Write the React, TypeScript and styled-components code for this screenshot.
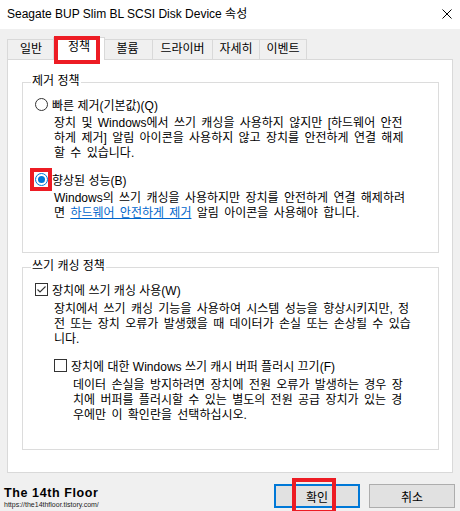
import React from 'react';
import styled, { createGlobalStyle } from 'styled-components';

const GlobalStyle = createGlobalStyle`
  html, body {
    margin: 0;
    padding: 0;
    background: #f0f0f0;
  }
  body {
    font-family: 'Liberation Sans', 'Noto Sans CJK KR', sans-serif;
    font-size: 12px;
    color: #000;
  }
`;

const Window = styled.div`
  width: 460px;
  height: 511px;
  overflow: hidden;
  display: flex;
  flex-direction: column;
  background: #f0f0f0;
`;

const TitleBar = styled.div`
  height: 29px;
  flex-shrink: 0;
  background: #fff;
  display: flex;
  align-items: center;
  justify-content: space-between;
  padding: 0 8px 0 7px;
`;

const TitleText = styled.span`
  font-size: 12px;
  line-height: 15px;
  margin-top: -1px;
`;

const CloseButton = styled.svg`
  width: 10px;
  height: 10px;
  margin-top: -2px;
`;

const Body = styled.div`
  flex: 1;
  display: flex;
  flex-direction: column;
  padding: 8px 7px 0 7px;
`;

const TabStrip = styled.div`
  display: flex;
  align-items: flex-end;
  height: 23px;
  margin-bottom: -1px;
  position: relative;
  z-index: 1;
`;

const Tab = styled.div<{ $width: number; $active?: boolean; $first?: boolean }>`
  position: relative;
  box-sizing: border-box;
  width: ${(p) => (p.$active ? p.$width + 4 : p.$width)}px;
  margin: ${(p) => (p.$active ? '0 -2px' : '0')};
  height: ${(p) => (p.$active ? 23 : 21)}px;
  background: ${(p) => (p.$active ? '#fff' : '#f0f0f0')};
  border: 1px solid #d9d9d9;
  border-left-width: ${(p) => (p.$first || p.$active ? 1 : 0)}px;
  border-bottom-width: ${(p) => (p.$active ? 0 : 1)}px;
  z-index: ${(p) => (p.$active ? 2 : 1)};
  display: flex;
  align-items: center;
  justify-content: center;
  padding-bottom: ${(p) => (p.$active ? 3 : 0)}px;
  line-height: 15px;
  white-space: nowrap;
`;

const Highlight = styled.div<{ $left: number; $top: number; $w: number; $h: number }>`
  position: absolute;
  left: ${(p) => p.$left}px;
  top: ${(p) => p.$top}px;
  width: ${(p) => p.$w}px;
  height: ${(p) => p.$h}px;
  box-sizing: border-box;
  border: 4px solid #ed1c24;
  pointer-events: none;
  z-index: 5;
`;

const Panel = styled.div`
  box-sizing: border-box;
  height: 414px;
  background: #fff;
  border: 1px solid #d9d9d9;
  padding: 22px 13px 0 14px;
  display: flex;
  flex-direction: column;
  gap: 14px;
`;

const GroupBox = styled.div<{ $height: number }>`
  position: relative;
  box-sizing: border-box;
  height: ${(p) => p.$height}px;
  border: 1px solid #dcdcdc;
  padding: 14px 0 0 12px;
`;

const GroupTitle = styled.span`
  position: absolute;
  top: -9px;
  left: 8px;
  padding: 0 1px;
  background: #fff;
  line-height: 15px;
`;

const OptionRow = styled.div<{ $indent?: number; $gap?: number }>`
  display: flex;
  align-items: center;
  height: 15px;
  margin-left: ${(p) => p.$indent ?? 0}px;
  margin-top: ${(p) => p.$gap ?? 0}px;
  white-space: nowrap;
`;

const ControlWrap = styled.span`
  position: relative;
  width: 13px;
  height: 13px;
  flex-shrink: 0;
  margin-right: 4px;
`;

const RadioCircle = styled.span<{ $checked?: boolean }>`
  display: flex;
  align-items: center;
  justify-content: center;
  box-sizing: border-box;
  width: 13px;
  height: 13px;
  border-radius: 50%;
  background: #fff;
  border: 1px solid ${(p) => (p.$checked ? '#0078d7' : '#333')};

  &::after {
    content: '';
    display: ${(p) => (p.$checked ? 'block' : 'none')};
    width: 7px;
    height: 7px;
    border-radius: 50%;
    background: #0078d7;
  }
`;

const CheckSquare = styled.span`
  display: block;
  box-sizing: border-box;
  width: 13px;
  height: 13px;
  background: #fff;
  border: 1px solid #333;
`;

const Description = styled.div<{ $indent: number; $gap?: number }>`
  margin-left: ${(p) => p.$indent}px;
  margin-top: ${(p) => p.$gap ?? 4}px;
  line-height: 15px;
  word-spacing: 2px;
`;

const Line = styled.div`
  white-space: nowrap;
`;

const Link = styled.span`
  color: #0066cc;
  text-decoration: underline;
`;

const ButtonBar = styled.div`
  display: flex;
  align-items: flex-start;
  margin: 11px -2px 0 -3px;
`;

const Watermark = styled.div`
  flex: 1;
  display: flex;
  flex-direction: column;
  padding-top: 3px;
`;

const WatermarkTitle = styled.span`
  font-family: 'Liberation Sans', sans-serif;
  font-weight: 700;
  font-size: 12.5px;
  line-height: 13px;
  letter-spacing: 0.6px;
`;

const WatermarkUrl = styled.span`
  font-family: 'Liberation Sans', sans-serif;
  font-size: 7px;
  line-height: 9px;
  color: #222;
`;

const DialogButton = styled.button<{ $default?: boolean }>`
  position: relative;
  box-sizing: border-box;
  width: 86px;
  height: 24px;
  margin-left: ${(p) => (p.$default ? 0 : 9)}px;
  padding: 0;
  background: #e1e1e1;
  border: ${(p) => (p.$default ? '2px solid #0078d7' : '1px solid #adadad')};
  font-family: inherit;
  font-size: 12px;
  color: #000;
`;

const tabs = [
  { label: '일반', width: 48 },
  { label: '정책', width: 48, active: true },
  { label: '볼륨', width: 50 },
  { label: '드라이버', width: 60 },
  { label: '자세히', width: 47 },
  { label: '이벤트', width: 47 },
];

const Radio = ({ checked, mark }: { checked?: boolean; mark?: boolean }) => (
  <ControlWrap>
    <RadioCircle $checked={checked} />
    {mark && <Highlight $left={-5} $top={-5} $w={22} $h={23} />}
  </ControlWrap>
);

const Checkbox = ({ checked }: { checked?: boolean }) => (
  <ControlWrap>
    <CheckSquare />
    {checked && (
      <svg
        width="13"
        height="13"
        viewBox="0 0 13 13"
        style={{ position: 'absolute', left: 0, top: 0 }}
      >
        <polyline points="2.5,6.5 5,9 10.5,3.5" fill="none" stroke="#333" strokeWidth="1.1" />
      </svg>
    )}
  </ControlWrap>
);

const Lines = ({ lines }: { lines: React.ReactNode[] }) => (
  <>
    {lines.map((l, i) => (
      <Line key={i}>{l}</Line>
    ))}
  </>
);

export default function App() {
  return (
    <>
      <GlobalStyle />
      <Window>
        <TitleBar>
          <TitleText>Seagate BUP Slim BL SCSI Disk Device 속성</TitleText>
          <CloseButton viewBox="0 0 10 10">
            <path d="M0.5 0.5 L9.5 9.5 M9.5 0.5 L0.5 9.5" stroke="#000" strokeWidth="1" />
          </CloseButton>
        </TitleBar>
        <Body>
          <TabStrip>
            {tabs.map((t, i) => (
              <Tab key={t.label} $width={t.width} $active={t.active} $first={i === 0}>
                {t.label}
                {t.active && <Highlight $left={0} $top={-2} $w={46} $h={28} />}
              </Tab>
            ))}
          </TabStrip>
          <Panel>
            <GroupBox $height={171}>
              <GroupTitle>제거 정책</GroupTitle>
              <OptionRow>
                <Radio />
                빠른 제거(기본값)(Q)
              </OptionRow>
              <Description $indent={19}>
                <Lines
                  lines={[
                    '장치 및 Windows에서 쓰기 캐싱을 사용하지 않지만 [하드웨어 안전',
                    '하게 제거] 알림 아이콘을 사용하지 않고 장치를 안전하게 연결 해제',
                    '할 수 있습니다.',
                  ]}
                />
              </Description>
              <OptionRow $gap={11}>
                <Radio checked mark />
                향상된 성능(B)
              </OptionRow>
              <Description $indent={19}>
                <Lines
                  lines={[
                    'Windows의 쓰기 캐싱을 사용하지만 장치를 안전하게 연결 해제하려',
                    <>
                      면 <Link>하드웨어 안전하게 제거</Link> 알림 아이콘을 사용해야 합니다.
                    </>,
                  ]}
                />
              </Description>
            </GroupBox>
            <GroupBox $height={183}>
              <GroupTitle>쓰기 캐싱 정책</GroupTitle>
              <OptionRow>
                <Checkbox checked />
                장치에 쓰기 캐싱 사용(W)
              </OptionRow>
              <Description $indent={19} $gap={5}>
                <Lines
                  lines={[
                    '장치에서 쓰기 캐싱 기능을 사용하여 시스템 성능을 향상시키지만, 정',
                    '전 또는 장치 오류가 발생했을 때 데이터가 손실 또는 손상될 수 있습',
                    '니다.',
                  ]}
                />
              </Description>
              <OptionRow $indent={19} $gap={11}>
                <Checkbox />
                장치에 대한 Windows 쓰기 캐시 버퍼 플러시 끄기(F)
              </OptionRow>
              <Description $indent={38} $gap={5}>
                <Lines
                  lines={[
                    '데이터 손실을 방지하려면 장치에 전원 오류가 발생하는 경우 장',
                    '치에 버퍼를 플러시할 수 있는 별도의 전원 공급 장치가 있는 경',
                    '우에만 이 확인란을 선택하십시오.',
                  ]}
                />
              </Description>
            </GroupBox>
          </Panel>
          <ButtonBar>
            <Watermark>
              <WatermarkTitle>The 14th Floor</WatermarkTitle>
              <WatermarkUrl>https://the14thfloor.tistory.com/</WatermarkUrl>
            </Watermark>
            <DialogButton $default>
              확인
              <Highlight $left={16} $top={-8} $w={44} $h={36} />
            </DialogButton>
            <DialogButton>취소</DialogButton>
          </ButtonBar>
        </Body>
      </Window>
    </>
  );
}
